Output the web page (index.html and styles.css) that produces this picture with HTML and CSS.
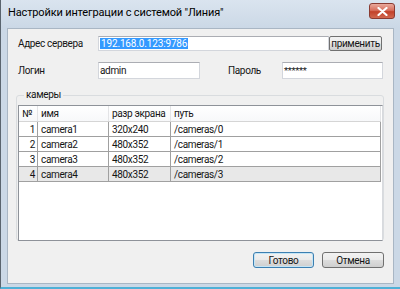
FILE: index.html
```html
<!DOCTYPE html>
<html>
<head>
<meta charset="utf-8">
<link rel="stylesheet" href="styles.css">
</head>
<body>
<div class="window">
  <div class="titlebar">
    <span class="title">Настройки интеграции с системой "Линия"</span>
    <div class="close">
      <svg width="11" height="9" viewBox="0 0 11 9"><path d="M1.5 1 L9.5 8 M9.5 1 L1.5 8" stroke="#fff" stroke-width="2.2" stroke-linecap="round"/></svg>
    </div>
  </div>
  <div class="client">
    <div class="row row1">
      <span class="label lab-server">Адрес сервера</span>
      <div class="input server"><span class="sel">192.168.0.123:9786</span></div>
      <div class="btn apply">применить</div>
    </div>
    <div class="row row2">
      <span class="label lab-login">Логин</span>
      <div class="input login">admin</div>
      <span class="label lab-pass">Пароль</span>
      <div class="input pass">******</div>
    </div>
    <div class="group">
      <span class="legend">камеры</span>
      <div class="table">
        <div class="tr head">
          <div class="c c1">№</div>
          <div class="c c2">имя</div>
          <div class="c c3">разр экрана</div>
          <div class="c c4">путь</div>
        </div>
        <div class="tr">
          <div class="c c1 num">1</div>
          <div class="c c2">camera1</div>
          <div class="c c3">320x240</div>
          <div class="c c4">/cameras/0</div>
        </div>
        <div class="tr">
          <div class="c c1 num">2</div>
          <div class="c c2">camera2</div>
          <div class="c c3">480x352</div>
          <div class="c c4">/cameras/1</div>
        </div>
        <div class="tr">
          <div class="c c1 num">3</div>
          <div class="c c2">camera3</div>
          <div class="c c3">480x352</div>
          <div class="c c4">/cameras/2</div>
        </div>
        <div class="tr cur">
          <div class="c c1 num">4</div>
          <div class="c c2">camera4</div>
          <div class="c c3">480x352</div>
          <div class="c c4">/cameras/3</div>
        </div>
      </div>
    </div>
    <div class="buttons">
      <div class="btn big ok">Готово</div>
      <div class="btn big">Отмена</div>
    </div>
  </div>
</div>
</body>
</html>
```

FILE: styles.css
```css
html, body {
  margin: 0;
  padding: 0;
  background: #ffffff;
}
body {
  font-family: Roboto, "Liberation Sans", sans-serif;
  font-size: 10px;
  letter-spacing: -0.35px;
  color: #151515;
}
.window {
  width: 400px;
  height: 289px;
  box-sizing: border-box;
  background: #cbd8e6;
  border-left: 1px solid #5a646e;
  border-bottom: 2px solid #4fb0d6;
  display: flex;
  flex-direction: column;
  padding: 0 6px 3px 6px;
}
.titlebar {
  height: 28px;
  flex: none;
  display: flex;
  align-items: flex-start;
  justify-content: space-between;
  margin-right: -6px;
  background: linear-gradient(#dae4ef, #cbd8e6);
  margin-left: -6px;
  padding-left: 7px;
}
.title {
  font-family: Roboto, "Liberation Sans", sans-serif;
  font-size: 11px;
  letter-spacing: -0.15px;
  color: #000;
  margin-top: 6px;
}
.close {
  width: 26px;
  height: 16px;
  margin-top: 3px;
  margin-right: 5px;
  border: 1px solid #8a3b32;
  border-radius: 3px;
  background: linear-gradient(#e9a99c 0%, #d8705e 45%, #c2412a 55%, #d1684f 100%);
  display: flex;
  align-items: center;
  justify-content: center;
  box-sizing: border-box;
}
.client {
  flex: 1;
  background: #f0f0f0;
  border: 1px solid #a9b6c4;
  display: flex;
  flex-direction: column;
  padding: 7px 9px 0 10px;
}
.row {
  display: flex;
  align-items: center;
}
.row1 {
  height: 15px;
}
.row2 {
  height: 17px;
  margin-top: 11px;
}
.label {
  white-space: nowrap;
}
.lab-server { width: 80px; }
.lab-login { width: 80px; }
.lab-pass { margin-left: 28px; width: 54px; }
.input {
  box-sizing: border-box;
  height: 100%;
  background: #fff;
  border: 1px solid #d3d6dc;
  border-top-color: #abadb3;
  display: flex;
  align-items: center;
  padding-left: 1px;
  white-space: nowrap;
}
.server {
  width: 231px;
}
.sel {
  background: #3399ff;
  color: #fff;
  padding: 0 1px;
  line-height: 11px;
  letter-spacing: -0.15px;
}
.login { width: 102px; }
.pass { width: 101px; font-size: 9.5px; }
.btn {
  box-sizing: border-box;
  border: 1px solid #707070;
  border-radius: 2px;
  background: linear-gradient(#f2f2f2 0%, #ebebeb 48%, #dddddd 52%, #cfcfcf 100%);
  display: flex;
  align-items: center;
  justify-content: center;
  white-space: nowrap;
}
.apply {
  width: 53px;
  height: 15px;
}
.group {
  position: relative;
  margin-top: 16px;
  margin-left: -2px;
  height: 146px;
  box-sizing: border-box;
  border: 1px solid #d9dcdf;
  border-radius: 3px;
  padding: 9px 0 0 1px;
  display: flex;
}
.legend {
  position: absolute;
  left: 7px;
  top: -7px;
  background: #f0f0f0;
  padding: 0 2px;
  line-height: 12px;
}
.table {
  flex: 1;
  background: #fff;
  border: 1px solid #8e9299;
  border-right-color: #d8dade;
  margin-bottom: -1px;
}
.tr {
  display: flex;
  height: 15px;
  width: 362px;
  box-sizing: border-box;
  border-bottom: 1px solid #a0a0a0;
  border-right: 1px solid #a0a0a0;
}
.tr.head {
  height: 16px;
  border-bottom: 1px solid #d5d5d5;
  border-right: none;
  background: linear-gradient(#ffffff, #f7f8fa);
}
.tr.cur {
  background: #e8e8e8;
}
.c {
  box-sizing: border-box;
  display: flex;
  align-items: center;
  padding-left: 3px;
  white-space: nowrap;
  border-right: 1px solid #a0a0a0;
}
.head .c {
  border-right: 1px solid #e3e4e6;
}
.c1 { width: 19px; }
.c2 { width: 71px; }
.c3 { width: 62px; }
.c4 { flex: 1; border-right: none; }
.num {
  justify-content: flex-end;
  padding-right: 2px;
  padding-left: 0;
}
.buttons {
  display: flex;
  justify-content: flex-end;
  gap: 8px;
  margin-top: 11px;
}
.big {
  width: 62px;
  height: 16px;
  border-radius: 3px;
}
.ok {
  width: 61px;
  border-color: #3c7fb1;
  box-shadow: inset 0 0 0 1px #c4e5f6;
}
```
